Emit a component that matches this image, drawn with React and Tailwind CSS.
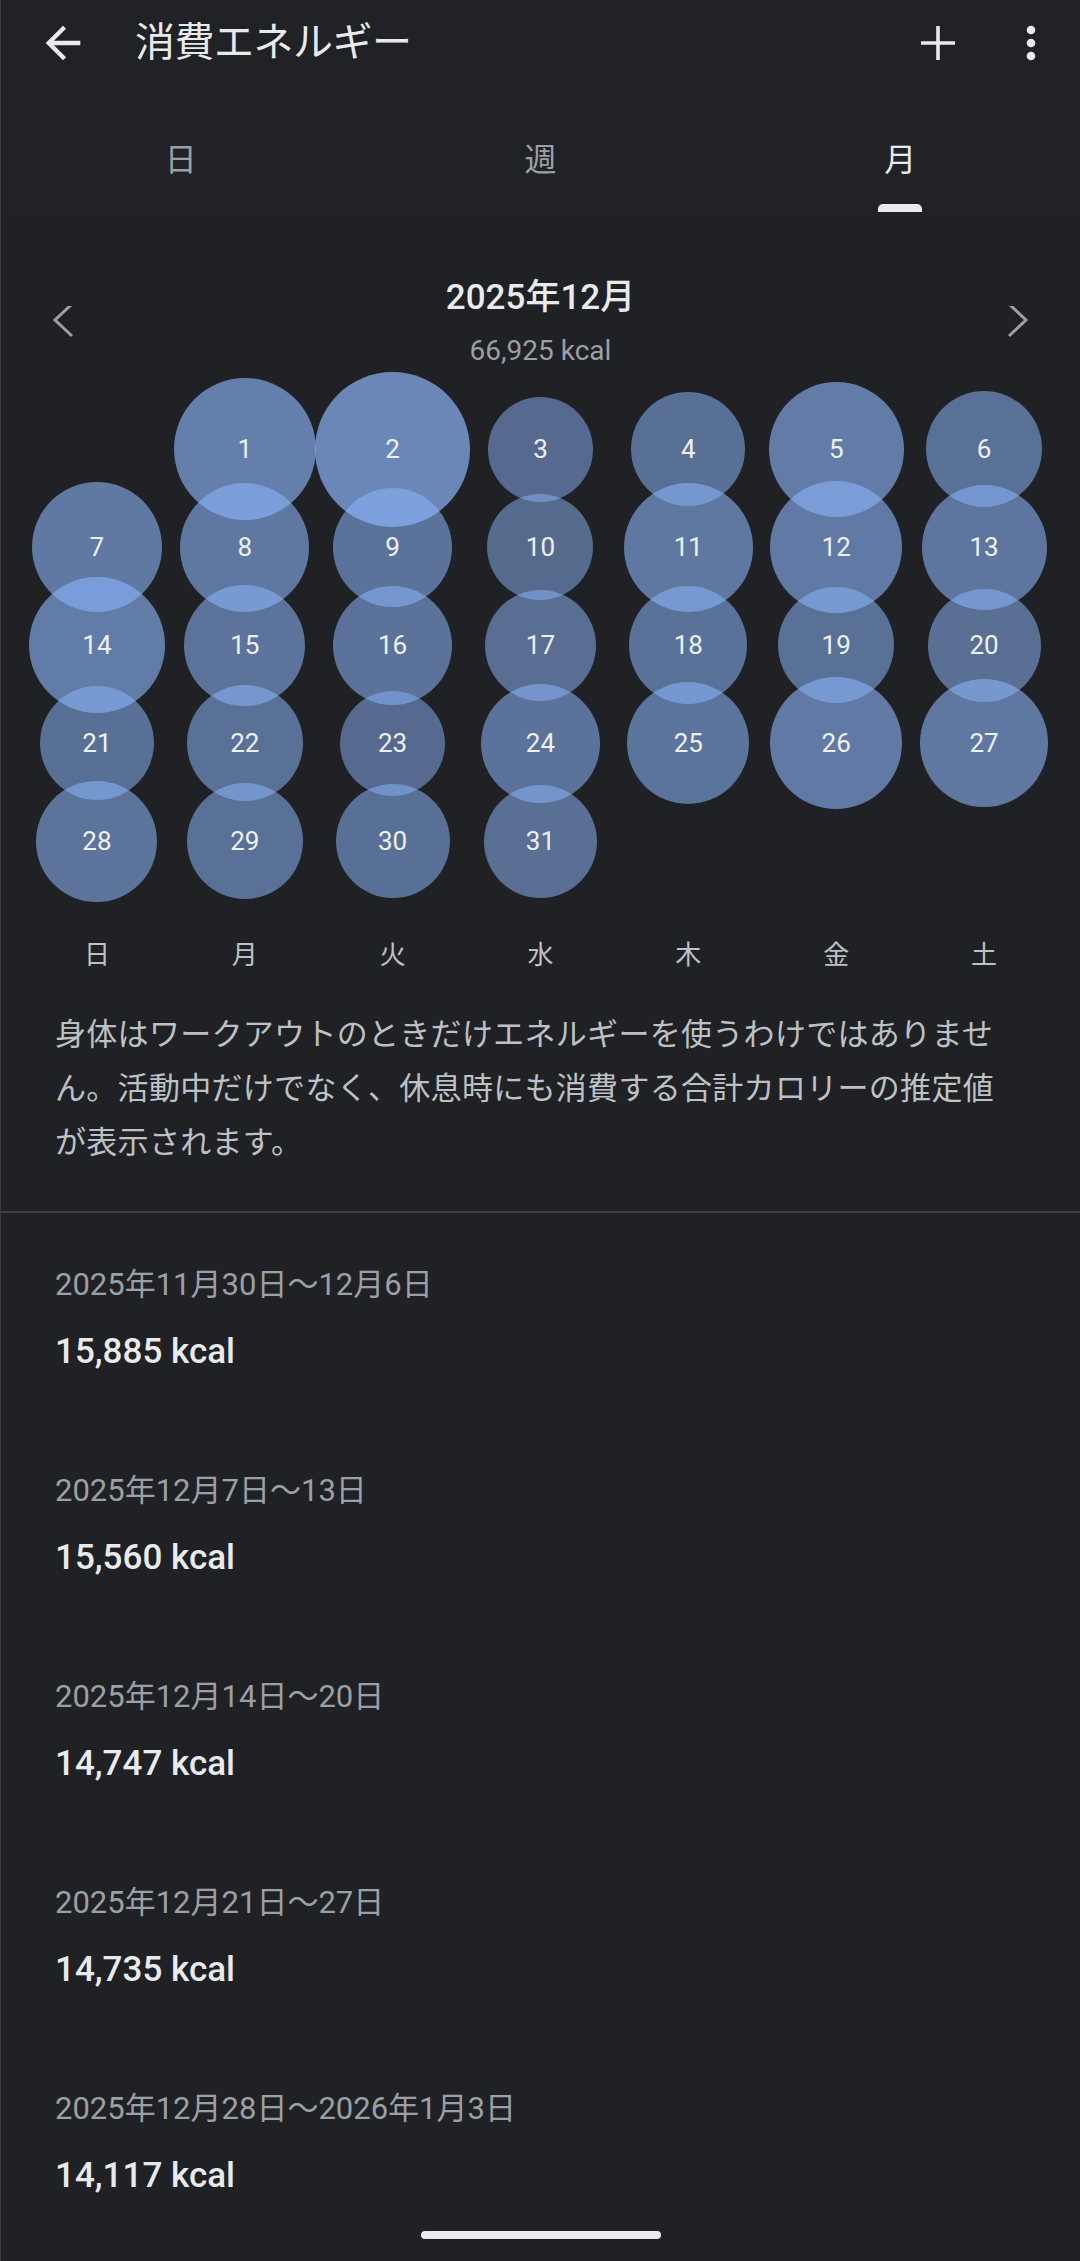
import React from "react";

const sizes = [
  142, 155, 105, 114, 135, 116, 130, 129, 119, 106, 129, 132, 125, 136, 121,
  119, 111, 118, 116, 113, 114, 116, 105, 119, 122, 132, 128, 121, 116, 114, 113,
];

const weekDays = ["日", "月", "火", "水", "木", "金", "土"];

const weeks = [
  { range: "2025年11月30日〜12月6日", kcal: "15,885 kcal" },
  { range: "2025年12月7日〜13日", kcal: "15,560 kcal" },
  { range: "2025年12月14日〜20日", kcal: "14,747 kcal" },
  { range: "2025年12月21日〜27日", kcal: "14,735 kcal" },
  { range: "2025年12月28日〜2026年1月3日", kcal: "14,117 kcal" },
];

function Bubble({ day, size }) {
  const alpha = 0.5 + ((size - 105) / 50) * 0.2;
  return (
    <div className="h-[98px] flex items-center justify-center">
      <div
        className="shrink-0 rounded-full flex items-center justify-center text-[26px] text-[#eef0f3]"
        style={{
          width: size,
          height: size,
          backgroundColor: `rgba(138,180,248,${alpha.toFixed(3)})`,
        }}
      >
        {day}
      </div>
    </div>
  );
}

function Tab({ label, active }) {
  return (
    <div className="flex-1 flex flex-col items-center pt-[54px]">
      <div
        className={`h-[40px] leading-[40px] text-[32px] ${
          active ? "text-[#e8eaed]" : "text-[#9aa0a6]"
        }`}
      >
        {label}
      </div>
      <div
        className={`mt-[24px] h-[8px] w-[44px] rounded-t-[5px] ${
          active ? "bg-[#e8eaed]" : "bg-transparent"
        }`}
      />
    </div>
  );
}

export default function App() {
  return (
    <div className="relative h-[2261px] w-[1080px] overflow-hidden bg-[#202124] border-l border-[#3a3b3f] font-['Roboto','Noto_Sans_CJK_JP',sans-serif]">
      {/* top bar */}
      <div className="bg-[#212226]">
        <div className="h-[86px] flex items-center pl-[36px] pr-[43px]">
          <svg width="52" height="52" viewBox="0 0 24 24" fill="#e8eaed">
            <path d="M20 11H7.83l5.59-5.59L12 4l-8 8 8 8 1.41-1.41L7.83 13H20v-2z" />
          </svg>
          <div className="ml-[46px] text-[40px] text-[#e8eaed] tracking-[-0.5px]">
            消費エネルギー
          </div>
          <div className="flex-1" />
          <svg width="38" height="38" viewBox="0 0 38 38" className="mr-[68px]">
            <path d="M19 2v34M2 19h34" stroke="#e8eaed" strokeWidth="3.6" />
          </svg>
          <svg width="12" height="40" viewBox="0 0 12 40">
            <circle cx="6" cy="7" r="4.3" fill="#e8eaed" />
            <circle cx="6" cy="20" r="4.3" fill="#e8eaed" />
            <circle cx="6" cy="33" r="4.3" fill="#e8eaed" />
          </svg>
        </div>
        <div className="flex h-[126px]">
          <Tab label="日" />
          <Tab label="週" />
          <Tab label="月" active />
        </div>
      </div>

      {/* month header */}
      <div className="flex items-center justify-between px-[50px] pt-[64px]">
        <svg width="24" height="34" viewBox="0 0 24 34">
          <polyline points="21,2 4,18 21,34" fill="none" stroke="#9aa0a6" strokeWidth="3" transform="translate(0,-4)" />
        </svg>
        <div className="flex flex-col items-center">
          <div className="h-[44px] leading-[44px] text-[35px] font-medium text-[#e8eaed]">
            2025年12月
          </div>
          <div className="mt-[13px] h-[36px] leading-[36px] text-[28px] text-[#9aa0a6]">
            66,925 kcal
          </div>
        </div>
        <svg width="24" height="34" viewBox="0 0 24 34">
          <polyline points="3,2 20,18 3,34" fill="none" stroke="#9aa0a6" strokeWidth="3" transform="translate(0,-4)" />
        </svg>
      </div>

      {/* bubble calendar */}
      <div className="mt-[31px] grid grid-cols-7 px-[22px]">
        <div />
        {sizes.map((s, i) => (
          <Bubble key={i} day={i + 1} size={s} />
        ))}
      </div>

      <div className="mt-[45px] grid grid-cols-7 px-[22px]">
        {weekDays.map((d) => (
          <div key={d} className="h-[40px] leading-[40px] text-center text-[26px] text-[#bdc1c6]">
            {d}
          </div>
        ))}
      </div>

      <p className="mt-[33px] w-[1009px] pl-[54px] text-[31px] tracking-[0.3px] leading-[54px] text-[#bdc1c6]">
        身体はワークアウトのときだけエネルギーを使うわけではありません。活動中だけでなく、休息時にも消費する合計カロリーの推定値が表示されます。
      </p>

      <div className="mt-[41px] h-[2px] bg-[#3c4043]" />

      {/* weekly list */}
      <div className="pt-[52px] px-[54px] flex flex-col gap-[97px]">
        {weeks.map((w) => (
          <div key={w.range} className="flex flex-col">
            <div className="h-[40px] leading-[40px] text-[31px] text-[#9aa0a6]">
              {w.range}
            </div>
            <div className="mt-[25px] h-[44px] leading-[44px] text-[35px] font-medium text-[#e8eaed]">
              {w.kcal}
            </div>
          </div>
        ))}
      </div>

      {/* gesture bar */}
      <div className="absolute left-[420px] top-[2231px] h-[8px] w-[240px] rounded-full bg-[#e8eaed]" />
    </div>
  );
}
